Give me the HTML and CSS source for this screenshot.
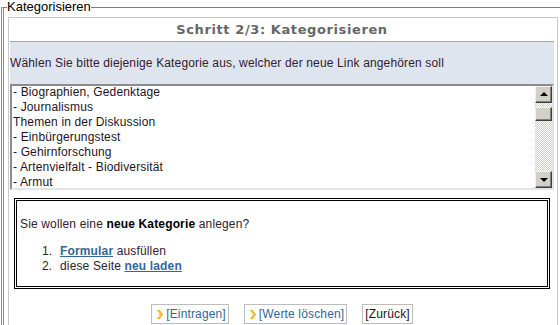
FILE: index.html
```html
<!DOCTYPE html>
<html lang="de">
<head>
    <meta charset="UTF-8">
    <title>Kategorisieren</title>
    <link rel="stylesheet" href="styles.css">
</head>
<body>
    <fieldset class="wizard">
        <legend>Kategorisieren</legend>
        <div class="panel">
            <div class="step-title">Schritt 2/3: Kategorisieren</div>
            <div class="hint">Wählen Sie bitte diejenige Kategorie aus, welcher der neue Link angehören soll</div>
            <div class="listbox">
                <div class="options">
                    <div>- Biographien, Gedenktage</div>
                    <div>- Journalismus</div>
                    <div>Themen in der Diskussion</div>
                    <div>- Einbürgerungstest</div>
                    <div>- Gehirnforschung</div>
                    <div>- Artenvielfalt - Biodiversität</div>
                    <div>- Armut</div>
                </div>
                <div class="scrollbar">
                    <div class="sb-btn"><span class="arrow-up"></span></div>
                    <div class="sb-track"><div class="sb-thumb"></div></div>
                    <div class="sb-btn"><span class="arrow-down"></span></div>
                </div>
            </div>
            <div class="new-cat">
                <p>Sie wollen eine <b>neue Kategorie</b> anlegen?</p>
                <ol>
                    <li><a href="#">Formular</a> ausfüllen</li>
                    <li>diese Seite <a href="#">neu laden</a></li>
                </ol>
            </div>
            <div class="actions">
                <a href="#" class="btn">
                    <svg width="6" height="9" viewBox="0 0 6 9"><polygon points="0,0 2.5,0 6,4.5 2.5,9 0,9 3,4.5" fill="#f4a300"/><polygon points="1,1 2,1 4.5,4.5 2,8 1,8 3.5,4.5" fill="#ffd86a"/></svg>
                    [Eintragen]
                </a>
                <a href="#" class="btn">
                    <svg width="6" height="9" viewBox="0 0 6 9"><polygon points="0,0 2.5,0 6,4.5 2.5,9 0,9 3,4.5" fill="#f4a300"/><polygon points="1,1 2,1 4.5,4.5 2,8 1,8 3.5,4.5" fill="#ffd86a"/></svg>
                    [Werte löschen]
                </a>
                <a href="#" class="btn plain">[Zurück]</a>
            </div>
        </div>
    </fieldset>
</body>
</html>
```

FILE: styles.css
```css
body {
    margin: 0;
    font-family: "Liberation Sans", Arial, sans-serif;
    font-size: 12px;
    letter-spacing: 0.15px;
    color: #302030;
    background: #fff;
}
.wizard {
    margin: 0 0 0 1px;
    padding: 3px 2px 0 4px;
    border: none;
    border-top: 1px solid #808080;
    border-left: 3px double #8a8a8a;
    min-width: 0;
}
.wizard legend {
    padding: 0;
    margin-left: -1px;
    color: #000;
    font-size: 13px;
    letter-spacing: 0;
    line-height: 14px;
}
.panel {
    border: 1px solid #c8c8c8;
    border-bottom: none;
    padding: 0 3px 10px 1px;
}
.step-title {
    height: 23px;
    line-height: 23px;
    text-align: center;
    font-family: "DejaVu Sans", Verdana, sans-serif;
    font-weight: bold;
    font-size: 13px;
    letter-spacing: 0.6px;
    color: #666;
}
.hint {
    border-top: 1px solid #a8a8a8;
    background: #dfe5ee;
    height: 42px;
    line-height: 42px;
}
.listbox {
    display: flex;
    height: 102px;
    border: 2px solid;
    border-color: #8c8c8c #e4e4e4 #e4e4e4 #8c8c8c;
    background: #fff;
}
.options {
    flex: 1;
    overflow: hidden;
    padding-left: 1px;
    line-height: 15px;
    color: #1e141e;
}
.options div:first-child {
    margin-top: -1px;
}
.scrollbar {
    width: 17px;
    display: flex;
    flex-direction: column;
}
.sb-btn, .sb-thumb {
    box-sizing: border-box;
    background: #d4d0c8;
    border: 1px solid;
    border-color: #f0f0f0 #404040 #404040 #f0f0f0;
    box-shadow: inset -1px -1px #808080;
}
.sb-btn {
    height: 17px;
    display: flex;
    align-items: center;
    justify-content: center;
}
.arrow-up, .arrow-down {
    width: 0;
    height: 0;
    border-left: 4px solid transparent;
    border-right: 4px solid transparent;
}
.arrow-up {
    border-bottom: 4px solid #000;
    margin-top: -1px;
}
.arrow-down {
    border-top: 4px solid #000;
}
.sb-track {
    flex: 1;
    background: repeating-conic-gradient(#d4d0c8 0 25%, #fff 0 50%) 0 0 / 2px 2px;
}
.sb-thumb {
    height: 14px;
    margin-top: 4px;
}
.new-cat {
    margin: 8px 4px 0 4px;
    border: 3px double #000;
    padding: 16px 3px 12px 3px;
}
.new-cat p {
    margin: 0 0 12px 0;
    line-height: 15px;
}
.new-cat b {
    color: #000;
}
.new-cat ol {
    margin: 0;
    padding-left: 22px;
    list-style: none;
    counter-reset: step;
    line-height: 15px;
}
.new-cat li::before {
    counter-increment: step;
    content: counter(step) ".";
    display: inline-block;
    width: 18px;
}
.new-cat a {
    color: #336699;
    font-weight: bold;
}
.actions {
    display: flex;
    justify-content: center;
    gap: 15px;
    margin-top: 15px;
}
.btn {
    display: flex;
    align-items: center;
    gap: 3px;
    height: 18px;
    padding: 0 2px 0 5px;
    border: 1px solid #bdbdbd;
    color: #336699;
    text-decoration: none;
}
.btn.plain {
    padding: 0 2px;
    color: #1e141e;
}
```
